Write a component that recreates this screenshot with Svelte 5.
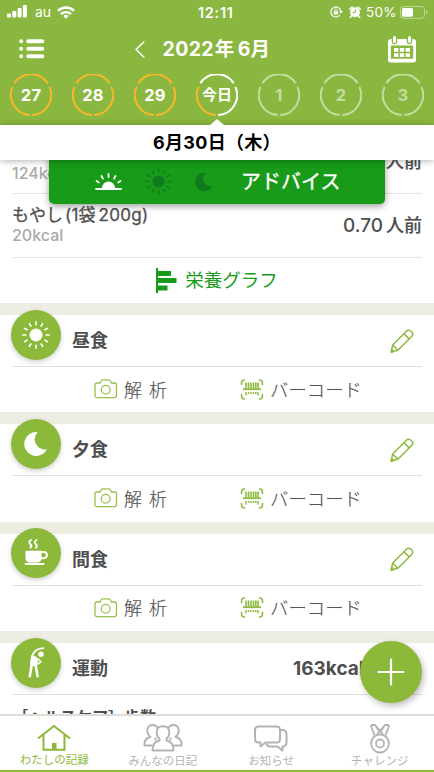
<script lang="ts">
    let days = [
        { label: "27", state: "done" },
        { label: "28", state: "done" },
        { label: "29", state: "done" },
        { label: "今日", state: "today" },
        { label: "1", state: "future" },
        { label: "2", state: "future" },
        { label: "3", state: "future" },
    ];

    let meals = [
        { name: "昼食", icon: "sun" },
        { name: "夕食", icon: "moon" },
        { name: "間食", icon: "cup" },
    ];

    const rays = Array.from({ length: 12 }, (_, i) => i * 30);
    const moonPath = "M1.800-12A12 12 0 1 0 11 5.200A10.200 10.200 0 0 1 1.800-12z";
</script>

<div class="app">
    <header class="header">
        <div class="status">
            <svg class="signal" width="20" height="13" viewBox="0 0 20 13" fill="#fff">
                <rect x="0" y="8.500" width="4" height="4" rx="1" />
                <rect x="5.300" y="6" width="4" height="6.500" rx="1" />
                <rect x="10.600" y="3" width="4" height="9.500" rx="1" />
                <rect x="15.900" y="0" width="4" height="12.500" rx="1" />
            </svg>
            <span class="carrier">au</span>
            <svg class="wifi" width="18" height="13" viewBox="0 0 18 13" fill="none" stroke="#fff" stroke-width="2.400">
                <path d="M1 4.800a11.500 11.500 0 0 1 16 0" />
                <path d="M4 8.100a7.200 7.200 0 0 1 10 0" />
                <path d="M9 12.700L6.200 10a4 4 0 0 1 5.600 0z" fill="#fff" stroke="none" />
            </svg>
            <span class="time">12:11</span>
            <svg class="lock" width="13" height="12" viewBox="0 0 13 12" fill="none" stroke="#fff" stroke-width="1.200">
                <path d="M10.800 5A5 5 0 1 0 9.800 9.100" />
                <path d="M9 5h4l-2 2.700z" fill="#fff" stroke="none" />
                <rect x="3.700" y="5.300" width="4.400" height="3.200" fill="#fff" stroke="none" />
                <path d="M4.700 5.500V4.200a1.200 1.200 0 0 1 2.400 0v1.300" stroke-width=".9" />
            </svg>
            <svg class="alarm" width="12" height="12" viewBox="0 0 12 12">
                <circle cx="6" cy="6.200" r="4.900" fill="#fff" />
                <path d="M.8 3L3.200 1M11.200 3L8.800 1M2.500 10l-1.200 1.500M9.500 10l1.200 1.500" stroke="#fff" stroke-width="1.600" stroke-linecap="round" />
                <path d="M6.300 3.200v3.300H3.700" fill="none" stroke="#8ab73f" />
            </svg>
            <span class="percent">50%</span>
            <svg class="battery" width="28" height="13" viewBox="0 0 28 13">
                <rect x=".5" y=".5" width="24" height="11.800" rx="3" fill="none" stroke="#fff" stroke-opacity=".45" />
                <rect x="2" y="2" width="11" height="8.800" rx="1.500" fill="#fff" />
                <path d="M26 4.300q1.600.6 1.600 2.100T26 8.500z" fill="#fff" fill-opacity=".45" />
            </svg>
        </div>

        <div class="nav">
            <svg width="26" height="20" viewBox="0 0 26 20" stroke="#fff" stroke-width="4" stroke-linecap="round">
                <path d="M2.200 2.200h.01M2.200 9.800h.01M2.200 17.300h.01M9.300 2.200h14M9.300 9.800h14M9.300 17.300h14" />
            </svg>
            <div class="month">
                <svg width="10" height="17" viewBox="0 0 10 17" fill="none" stroke="#fff" stroke-width="1.600" stroke-linecap="round" stroke-linejoin="round">
                    <path d="M8.800 1L1 8.500 8.800 16" />
                </svg>
                <h1>2022<span class="kanji">年</span>6月</h1>
            </div>
            <svg width="28" height="27" viewBox="0 0 28 27">
                <path d="M3 3h22q3 0 3 3v18q0 2.500-3 2.500H3q-3 0-3-2.500V6q0-3 3-3z" fill="#fff" />
                <path d="M2.800 9.500h22.400v13.200H2.800z" fill="#8ab73f" />
                <path d="M6.500 1.500v4M21.500 1.500v4" stroke="#8ab73f" stroke-width="5.500" stroke-linecap="round" />
                <path d="M6.500 1.500v4M21.500 1.500v4" stroke="#fff" stroke-width="3" stroke-linecap="round" />
                <path d="M6 12h4.400v3.800H6zM11.800 12h4.400v3.800h-4.400zM17.600 12H22v3.800h-4.400zM6 17.300h4.400v3.800H6zM11.800 17.300h4.400v3.800h-4.400zM17.600 17.300H22v3.800h-4.400z" fill="#fff" />
            </svg>
        </div>

        <div class="days">
            {#each days as day}
                <div class="day {day.state}">
                    <svg width="42" height="42" viewBox="0 0 42 42" fill="none" stroke-width="2">
                        <path class="arc top" d="M4.300 9.200A20 20 0 0 1 37.700 9.200" />
                        <path class="arc left" d="M2.600 12.800A20 20 0 0 0 19.800 41" />
                        <path class="arc right" d="M39.400 12.800A20 20 0 0 1 22.200 41" />
                    </svg>
                    <span>{day.label}</span>
                </div>
            {/each}
        </div>
    </header>

    <div class="date">6月30日<span>（木）</span></div>

    <main class="content">
        <div class="advice">
            <svg class="sunrise" width="27" height="19" viewBox="0 0 27 19" stroke="#fff" stroke-width="1.800" stroke-linecap="round">
                <path d="M7 16a6.500 6.500 0 0 1 13 0z" fill="#fff" stroke="none" />
                <path d="M1 17h25" />
                <path d="M13.500 2v3M6.500 4l1.400 2.600M20.500 4l-1.400 2.600M1.500 9l2.300 1.500M25.500 9l-2.300 1.500" />
            </svg>
            <svg class="sun" width="27" height="27" viewBox="-13.500 -13.500 27 27" fill="#117a1c" stroke="#117a1c" stroke-width="1.400" stroke-linecap="round">
                <circle r="6" stroke="none" />
                {#each rays as angle}
                    <path d="M0-9.500v-2.800" transform="rotate({angle})" />
                {/each}
            </svg>
            <svg class="night" width="20" height="20" viewBox="-13 -13 26 26" fill="#117a1c">
                <path d={moonPath} />
            </svg>
            <span>アドバイス</span>
        </div>

        <div class="food first">
            <p class="kcal">124kcal</p>
            <p class="amount"><span>人前</span></p>
        </div>
        <div class="food">
            <div>
                <p class="name">もやし<span class="open">(1</span>袋<span class="gap">200g)</span></p>
                <p class="kcal">20kcal</p>
            </div>
            <p class="amount">0.70<span>人前</span></p>
        </div>

        <div class="graph">
            <svg width="21" height="25" viewBox="0 0 21 25" fill="#179b19">
                <path d="M0 0h2v25H0zM2 3h13v5H2zM2 10h18.500v5H2zM2 17.500h9.500v5H2z" />
            </svg>
            <span>栄養グラフ</span>
        </div>

        {#each meals as meal}
            <section class="meal">
                <div class="head">
                    <div class="badge">
                        {#if meal.icon === "sun"}
                            <svg width="30" height="30" viewBox="-15 -15 30 30" fill="#fff" stroke="#fff" stroke-width="1.600" stroke-linecap="round">
                                <circle r="6.500" stroke="none" />
                                {#each rays as angle}
                                    <path d="M0-10.200v-3" transform="rotate({angle})" />
                                {/each}
                            </svg>
                        {:else if meal.icon === "moon"}
                            <svg width="26" height="26" viewBox="-13 -13 26 26" fill="#fff">
                                <path d={moonPath} />
                            </svg>
                        {:else}
                            <svg class="cup" width="26" height="28" viewBox="0 0 26 28" fill="none" stroke="#fff" stroke-width="2" stroke-linecap="round">
                                <path d="M8 2q-3 2-.8 4t.3 3.600M13.500 2q-3 2-.8 4t.3 3.600" />
                                <path d="M3.200 13.500h14.600v6.200q0 4-4 4H7.200q-4 0-4-4z" fill="#fff" stroke-linejoin="round" stroke-width="1.500" />
                                <path d="M18 14h2.800a3 3 0 0 1 0 6.200H18M2.500 26h18" />
                            </svg>
                        {/if}
                    </div>
                    <h2>{meal.name}</h2>
                    <svg class="pencil" width="24" height="24" viewBox="0 0 24 24" fill="none" stroke="#8db93d" stroke-width="1.500" stroke-linejoin="round">
                        <path d="M1.200 23l1.500-7L16.400 2.300q2.300-2.300 5 .2t.2 5L7.900 21.200zM2.700 16l5.200 5.200M14 4.700l5.200 5.200" />
                        <path d="M1.200 23l.6-2.500 1.800 1.900z" fill="#8db93d" />
                    </svg>
                </div>
                <div class="actions">
                    <div class="scan">
                        <svg width="24" height="20" viewBox="0 0 24 20" fill="none" stroke="#95c14c" stroke-width="1.300">
                            <path d="M3 4h3l1-2q.5-1.200 2-1.200h5.500q1.500 0 2 1.200l1 2h3q2 0 2 2v10.600q0 2-2 2H3q-2 0-2-2V6q0-2 2-2z" />
                            <circle cx="11.700" cy="10.700" r="4.400" />
                        </svg>
                        <span>解 析</span>
                    </div>
                    <div class="barcode">
                        <svg width="24" height="21" viewBox="0 0 24 21" fill="none" stroke="#8db93d" stroke-width="1.500">
                            <path d="M1.500 5.500V4q0-3 3-3M22.500 5.500V4q0-3-3-3M1.500 15.500V17q0 3 3 3M22.500 15.500V17q0 3-3 3" stroke-linecap="round" />
                            <path d="M3 10.200h18" stroke-width="1.800" />
                            <path d="M6 3.500v6M8.500 3.500v6M11 3.500v6M13.500 3.500v6M15.800 3.500v6M18 3.500v6" stroke-width="1.600" />
                            <path d="M6 13v3.500M8.500 13v2M11 13v2M13.500 13v2M15.800 13v2M18 13v3.500" stroke-width="1.400" />
                        </svg>
                        <span>バーコード</span>
                    </div>
                </div>
            </section>
        {/each}

        <section class="meal exercise">
            <div class="head">
                <div class="badge">
                    <svg width="18" height="31" viewBox="0 0 18 31" fill="none" stroke="#fff" stroke-linecap="round" stroke-linejoin="round">
                        <circle cx="14" cy="7.300" r="2.700" fill="#fff" stroke="none" />
                        <path d="M16.500 1.200Q7 1.500 5 10" stroke-width="1.800" />
                        <path d="M5 8.500q3.500.5 5.800 3.500l-1.300 6.500H3.600q-.3-5 1.400-10z" fill="#fff" stroke-width="1" />
                        <path d="M4.600 18.500L2.800 29.300M8.700 18.500l1.900 10.800" stroke-width="2.600" />
                        <path d="M10.500 11.500l3.500 3.300-3.500 2.400" stroke-width="1.400" />
                    </svg>
                </div>
                <h2>運動</h2>
                <strong>163kcal</strong>
            </div>
            <p class="steps">［ヘルスケア］歩数</p>
        </section>
    </main>

    <button class="add" aria-label="追加">
        <svg width="28" height="28" viewBox="0 0 28 28" stroke="#fff" stroke-width="2.200" stroke-linecap="round">
            <path d="M14 1.500v25M1.500 14h25" />
        </svg>
    </button>

    <nav class="tabs">
        <div class="tab active">
            <svg width="34" height="27" viewBox="0 0 34 27" fill="none" stroke="currentColor" stroke-width="2">
                <path d="M1 14.500L17 2l16 12.500" />
                <path d="M6.500 11v14.800h21V11" />
                <path d="M15 19h4.500v7H15z" fill="currentColor" stroke="none" />
            </svg>
            <span>わたしの記録</span>
        </div>
        <div class="tab">
            <svg width="40" height="28" viewBox="0 0 40 28" fill="none" stroke="currentColor" stroke-width="1.900" stroke-linejoin="round">
                <path d="M9.500 21.500H1.500q-.8-7 6-8.500-4-3.500-3-8 1-4 5-4t5.300 3.300M30.500 21.500h8q.8-7-6-8.500 4-3.500 3-8-1-4-5-4t-5.300 3.300" />
                <path d="M16.500 16.500v-1.700q-2.800-2.300-2.800-6.300 0-6.200 6.300-6.200t6.300 6.200q0 4-2.800 6.300v1.700q7 1.300 7 10H9.500q0-8.700 7-10z" />
                <path d="M12.500 13.500v3M27.500 13.500v3" />
            </svg>
            <span>みんなの日記</span>
        </div>
        <div class="tab">
            <svg width="34" height="27" viewBox="0 0 34 27" fill="none" stroke="currentColor" stroke-width="2" stroke-linejoin="round">
                <path d="M4.500 1.500h18q3.500 0 3.500 3.500v9q0 3.500-3.500 3.500H11.500l-5 4v-4h-2Q1 17.500 1 14V5q0-3.500 3.500-3.500z" />
                <path d="M26 5h2.500Q32.500 5 32.500 9v8.500q0 4-4 4v4l-5-4H16.500q-3.500 0-4-3" />
            </svg>
            <span>お知らせ</span>
        </div>
        <div class="tab">
            <svg class="medal" width="20" height="30" viewBox="0 0 20 30" fill="none" stroke="currentColor" stroke-width="1.800" stroke-linejoin="round">
                <circle cx="10" cy="19.500" r="9" />
                <circle cx="10" cy="19.500" r="4" />
                <path d="M4.500 11.500L1 2l.8-1H5l5 7.500L15 1h3.200l.8 1-3.500 9.500M5 1l8 9M15 1L7 10" />
            </svg>
            <span>チャレンジ</span>
        </div>
    </nav>
</div>

<style>
    :global(body) { margin: 0; background: #fff; }
    .app { position: relative; display: flex; flex-direction: column; width: 434px; height: 772px; overflow: hidden; background: #fff; color: #4f4f4f; font-family: Inter, "Noto Sans CJK JP", sans-serif; }
    svg { display: block; flex: none; }
    h1, h2, p { margin: 0; }

    .header { height: 125px; flex: none; background: #8ab73f; color: #fff; }
    .status { display: flex; align-items: center; height: 24px; padding: 0 5px 0 7px; box-sizing: border-box; }
    .signal { margin-top: -2px; }
    .carrier { margin-left: 8px; font-size: 14px; line-height: 24px; width: 15px; }
    .wifi { margin-left: 7px; }
    .time { margin-left: 123px; width: 39px; font-size: 14.5px; font-weight: 600; letter-spacing: 0.7px; }
    .lock { margin-left: 93px; }
    .alarm { margin-left: 6px; }
    .percent { margin-left: 5px; width: 31px; font-size: 13.5px; letter-spacing: 0.3px; }
    .battery { margin-left: 3px; }

    .nav { display: flex; align-items: center; justify-content: space-between; height: 50px; padding: 0 18px 0 19px; }
    .month { display: flex; align-items: center; gap: 18px; margin-right: 28px; }
    .month h1 { font-size: 19.5px; font-weight: 700; line-height: 28px; letter-spacing: 0.3px; white-space: nowrap; }
    .kanji { margin: 0 3px 0 1px; }

    .days { display: grid; grid-template-columns: repeat(7, 62px); }
    .day { display: grid; place-items: center; height: 42px; color: #fff; font-size: 16.5px; font-weight: 700; letter-spacing: 0.2px; }
    .day svg, .day span { grid-area: 1 / 1; }
    .arc { stroke: #f8b62b; }
    .today { font-size: 15px; letter-spacing: 0; }
    .today span { margin-top: -3px; }
    .today .top, .today .right { stroke: #fff; }
    .future { color: #c6dca0; }
    .future .arc { stroke: #c6dca0; }

    .date { position: relative; z-index: 3; flex: none; height: 35px; line-height: 35px; text-align: center; background: #fff; color: #000; font-size: 18px; font-weight: 700; letter-spacing: 0.3px; box-shadow: 0 1px 7px rgba(0, 0, 0, 0.3); clip-path: inset(-10px 0 -10px 0); }
    .date::before { content: ""; position: absolute; top: -6px; left: 210px; border: 7px solid transparent; border-top: 0; border-bottom: 6px solid #fff; }

    .content { position: relative; flex: 1; min-height: 0; overflow: hidden; }
    .advice { position: absolute; z-index: 2; top: -6px; left: 49px; display: flex; align-items: center; width: 336px; height: 50px; padding: 5px 0 0 46px; box-sizing: border-box; border-radius: 5px; background: #179b19; color: #fff; box-shadow: 0 2px 7px rgba(0, 0, 0, 0.4); }
    .advice .sun { margin-left: 23px; }
    .advice .night { margin-left: 22px; }
    .advice span { margin-left: 27px; font-size: 20px; line-height: 24px; -webkit-text-stroke: 0.4px; }

    .food { display: flex; justify-content: space-between; align-items: center; height: 63px; margin: 0 12px; border-bottom: 1px solid #e4e4e4; }
    .food > * { margin-top: -3px; }
    .first { margin-top: -30px; }
    .first .kcal { padding-top: 25px; }
    .name { font-size: 17px; line-height: 22px; color: #505050; -webkit-text-stroke: 0.3px; white-space: nowrap; }
    .name .open { margin-left: 2px; letter-spacing: 0.2px; }
    .name .gap { margin-left: 3px; letter-spacing: 0.3px; }
    .kcal { color: #aaa; font-size: 16px; line-height: 18px; font-weight: 500; }
    .amount { font-size: 19px; font-weight: 500; }
    .amount span { margin-left: 3px; font-size: 18px; -webkit-text-stroke: 0.2px; }

    .graph { display: flex; align-items: center; justify-content: center; gap: 8px; height: 45px; color: #179b19; font-size: 18.5px; }
    .graph span { margin-top: -3px; }

    .meal { border-top: 12px solid #edede3; height: 97.4px; }
    .head { display: flex; align-items: center; height: 51px; margin: 0 12px; border-bottom: 1px solid #e1e1e1; }
    .badge { display: grid; place-items: center; width: 50px; height: 50px; margin: -12px 11px 0 -1px; border-radius: 50%; background: #8db93b; box-shadow: 0 2px 5px rgba(0, 0, 0, 0.2); }
    .cup { margin-top: -3px; }
    .head h2 { margin-top: -3px; font-size: 18px; font-weight: 700; color: #4f4f4f; }
    .pencil { margin-left: auto; margin-right: 8px; }
    .actions { display: flex; align-items: center; height: 45px; color: #555; font-size: 18px; font-weight: 300; -webkit-text-stroke: 0.2px; }
    .actions span { margin-top: -2px; }
    .actions svg { margin-top: -1px; }
    .scan, .barcode { display: flex; align-items: center; gap: 6px; }
    .scan { margin-left: 94px; width: 146px; }
    .scan span { word-spacing: 2px; }
    .barcode span { font-size: 18.4px; }
    .head strong { margin-left: 185px; font-size: 19px; font-weight: 700; }
    .steps { margin-left: 12px; font-size: 16px; font-weight: 700; line-height: 44px; }

    .add { position: absolute; z-index: 4; left: 360px; top: 641px; display: grid; place-items: center; width: 62px; height: 62px; padding: 0; border: 0; border-radius: 50%; background: #8db93b; box-shadow: 2px 3px 6px rgba(0, 0, 0, 0.25); }

    .tabs { position: relative; display: grid; grid-template-columns: repeat(4, 1fr); flex: none; height: 58px; box-sizing: border-box; border-top: 2px solid #deded8; border-bottom: 2px solid #8db93b; background: #fff; }
    .tab { display: flex; flex-direction: column; align-items: center; justify-content: flex-end; color: #b3b3b3; font-size: 11.5px; line-height: 17px; }
    .tab svg { flex-shrink: 0; margin-bottom: 1px; }
    .tab .medal { margin-bottom: -1px; }
    .active { padding-bottom: 1px; color: #8db93b; }
</style>
